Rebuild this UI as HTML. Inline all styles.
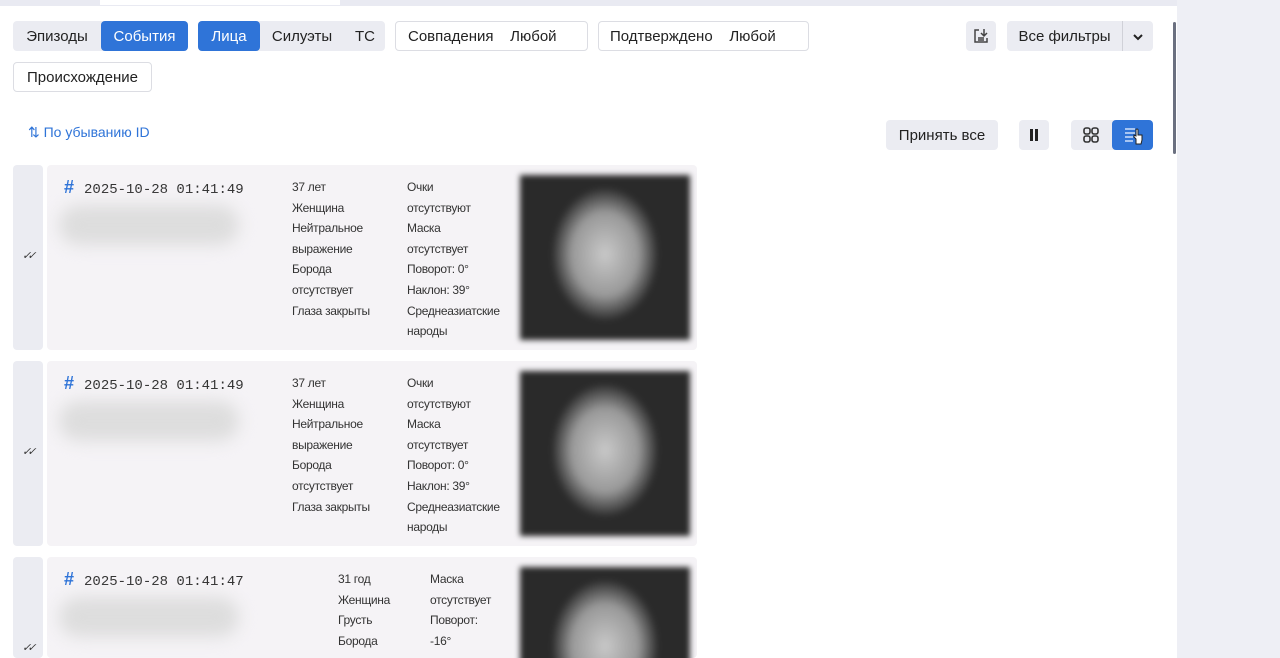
<!DOCTYPE html><html><head><meta charset="utf-8"><style>
*{box-sizing:border-box;margin:0;padding:0}
html,body{width:1280px;height:658px;overflow:hidden}
body{background:#fff;font-family:"Liberation Sans",sans-serif;color:#222}
#r{position:relative;width:1280px;height:658px;overflow:hidden}
.a{position:absolute}
.btn{position:absolute;height:30px;border-radius:4px;font-size:15px;line-height:31px;text-align:center;font-weight:500}
.g{background:#ebecf2}.b{background:#2f74d8;color:#fff}.w{background:#fff;border:1px solid #dcdde3;line-height:29px}
.chk{position:absolute;left:13px;width:30px;background:#ebecf2;border-radius:4px;overflow:hidden}
.card{position:absolute;left:47px;width:650px;background:#f5f3f6;border-radius:4px;overflow:hidden}
.t{position:absolute;font-size:12px;line-height:20.6px;color:#333;letter-spacing:-0.3px}
.ts{position:absolute;left:17px;top:12px;font-family:"Liberation Mono",monospace;font-size:14px;color:#333}
.ts b{color:#2f74d8;font-family:"Liberation Sans";font-size:18px;margin-right:10px}
.blur{position:absolute;left:12px;top:40px;width:180px;height:40px;background:#ddd;filter:blur(8px);border-radius:20px}
.ph{position:absolute;left:473px;top:10px;width:170px;height:165px;background:radial-gradient(ellipse 60px 75px at 50% 48%,#c8c8c8,#999 55%,#2a2a2a 90%);filter:blur(3px)}
.ck{position:absolute;left:9px;top:84px;font-size:11px;font-style:italic;letter-spacing:-4px;color:#333}
</style></head><body><div id="r">
<div class="a" style="left:0;top:0;width:1280px;height:6px;background:#e9eaf2"></div>
<div class="a" style="left:100px;top:0;width:240px;height:5px;background:#fff"></div>
<div class="a" style="left:1177px;top:0;width:103px;height:658px;background:#eeeff5"></div>
<div class="a" style="left:1173px;top:22px;width:3px;height:132px;background:#6b7080;border-radius:2px"></div>

<div class="btn g" style="left:13px;top:21px;width:173px"></div>
<div class="btn" style="left:13px;top:21px;width:88px">Эпизоды</div>
<div class="btn b" style="left:101px;top:21px;width:87px">События</div>
<div class="btn g" style="left:198px;top:21px;width:187px"></div>
<div class="btn b" style="left:198px;top:21px;width:62px">Лица</div>
<div class="btn" style="left:262px;top:21px;width:80px">Силуэты</div>
<div class="btn" style="left:346px;top:21px;width:38px">ТС</div>
<div class="btn w" style="left:395px;top:21px;width:193px;text-align:left;padding-left:12px">Совпадения&nbsp;&nbsp;&nbsp;&nbsp;Любой</div>
<div class="btn w" style="left:598px;top:21px;width:211px;text-align:left;padding-left:11px">Подтверждено&nbsp;&nbsp;&nbsp;&nbsp;Любой</div>
<div class="btn w" style="left:13px;top:62px;width:139px">Происхождение</div>
<div class="btn g" style="left:966px;top:21px;width:30px"><svg width="18" height="18" viewBox="0 0 18 18" style="margin-top:6px" fill="none" stroke="#444" stroke-width="1.5"><path d="M7 3H3v12h12v-4"/><path d="M12 2v7M9 6l3 3 3-3"/><path d="M6 11h6M6 13h6"/></svg></div>
<div class="btn g" style="left:1007px;top:21px;width:146px"></div>
<div class="btn" style="left:1007px;top:21px;width:115px">Все фильтры</div>
<div class="a" style="left:1122px;top:21px;width:1px;height:30px;background:#d0d1d8"></div>
<div class="btn" style="left:1123px;top:21px;width:30px"><svg width="12" height="8" viewBox="0 0 12 8" fill="none" stroke="#222" stroke-width="2"><path d="M2 2l4 4 4-4"/></svg></div>

<div class="a" style="left:28px;top:124px;font-size:14px;color:#2f74d8">⇅ По убыванию ID</div>
<div class="btn g" style="left:886px;top:120px;width:112px">Принять все</div>
<div class="btn g" style="left:1019px;top:120px;width:30px"><svg width="10" height="12" viewBox="0 0 10 12" style="margin-top:9px"><rect x="1" y="0" width="3" height="12" fill="#222"/><rect x="6" y="0" width="3" height="12" fill="#222"/></svg></div>
<div class="btn g" style="left:1071px;top:120px;width:82px;text-align:left;padding-left:11px"><svg width="18" height="18" viewBox="0 0 18 18" style="margin-top:6px" fill="none" stroke="#333" stroke-width="1.6"><rect x="2" y="2" width="6" height="6" rx="2"/><rect x="10" y="2" width="6" height="6" rx="2"/><rect x="2" y="10" width="6" height="6" rx="2"/><rect x="10" y="10" width="6" height="6" rx="2"/></svg></div>
<div class="btn b" style="left:1112px;top:120px;width:41px"><svg width="22" height="20" viewBox="0 0 22 20" style="margin-top:5px" fill="none" stroke="#cfe0fa" stroke-width="1.5"><path d="M3 4h10M3 8h10M3 12h8M3 16h8"/><path d="M14 19v-5l-2-2v-2l2 1V5a1 1 0 012 0v5h4v5l-1 4z" fill="#fff" stroke="#222" stroke-width="1"/></svg></div>

<div class="chk" style="top:165px;height:185px"><div class="ck">✓✓</div></div>
<div class="card" style="top:165px;height:185px">
<div class="ts"><b>#</b>2025-10-28 01:41:49</div><div class="blur"></div>
<div class="t" style="left:245px;top:12px">37 лет<br>Женщина<br>Нейтральное<br>выражение<br>Борода<br>отсутствует<br>Глаза закрыты</div>
<div class="t" style="left:360px;top:12px">Очки<br>отсутствуют<br>Маска<br>отсутствует<br>Поворот: 0°<br>Наклон: 39°<br>Среднеазиатские<br>народы</div>
<div class="ph"></div></div>

<div class="chk" style="top:361px;height:185px"><div class="ck">✓✓</div></div>
<div class="card" style="top:361px;height:185px">
<div class="ts"><b>#</b>2025-10-28 01:41:49</div><div class="blur"></div>
<div class="t" style="left:245px;top:12px">37 лет<br>Женщина<br>Нейтральное<br>выражение<br>Борода<br>отсутствует<br>Глаза закрыты</div>
<div class="t" style="left:360px;top:12px">Очки<br>отсутствуют<br>Маска<br>отсутствует<br>Поворот: 0°<br>Наклон: 39°<br>Среднеазиатские<br>народы</div>
<div class="ph"></div></div>

<div class="chk" style="top:557px;height:101px"><div class="ck">✓✓</div></div>
<div class="card" style="top:557px;height:101px">
<div class="ts"><b>#</b>2025-10-28 01:41:47</div><div class="blur"></div>
<div class="t" style="left:291px;top:12px">31 год<br>Женщина<br>Грусть<br>Борода</div>
<div class="t" style="left:383px;top:12px">Маска<br>отсутствует<br>Поворот:<br>-16°</div>
<div class="ph"></div></div>
</div></body></html>
